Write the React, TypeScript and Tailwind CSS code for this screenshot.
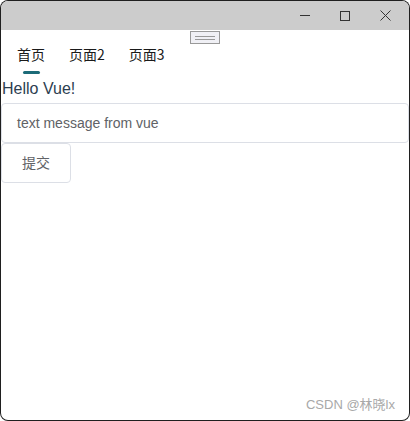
import React from "react";

const tabs = ["首页", "页面2", "页面3"];

export default function App() {
    return (
        <div
            className="w-[410px] h-[421px] bg-[#1f1f1f] rounded-[8px] p-px overflow-hidden"
            style={{ fontFamily: '"Liberation Sans", "Noto Sans CJK SC", sans-serif' }}
        >
            <div className="w-full h-full bg-white rounded-[7px] overflow-hidden flex flex-col">
                {/* Title bar */}
                <div className="h-[29px] bg-[#cccccc] flex justify-end items-center shrink-0">
                    <div className="w-[40px] h-full flex items-center justify-center">
                        <div className="w-[10px] h-px bg-[#333]" />
                    </div>
                    <div className="w-[40px] h-full flex items-center justify-center">
                        <div className="w-[10px] h-[10px] border border-[#333]" />
                    </div>
                    <div className="w-[40px] h-full flex items-center justify-center mr-[4px]">
                        <svg width="11" height="11" viewBox="0 0 11 11">
                            <path d="M0.5 0.5 L10.5 10.5 M10.5 0.5 L0.5 10.5" stroke="#333" strokeWidth="1" />
                        </svg>
                    </div>
                </div>

                {/* Drag handle */}
                <div className="flex justify-center pt-px">
                    <div className="w-[30px] h-[13px] border border-[#999] bg-[#f0f0f5] flex flex-col items-center justify-center gap-[2px]">
                        <div className="w-[20px] h-px bg-[#999]" />
                        <div className="w-[20px] h-px bg-[#999]" />
                    </div>
                </div>

                {/* Tabs */}
                <div className="flex pl-[16px] gap-[24px]">
                    {tabs.map((t, i) => (
                        <div key={t} className="flex flex-col items-center">
                            <span
                                className="text-[14px] leading-[20px] text-[#1a1a1a]"
                                style={{ fontFamily: '"Noto Sans CJK SC", sans-serif' }}
                            >
                                {t}
                            </span>
                            <div className={`mt-[7px] w-[17px] h-[3px] rounded-full ${i === 0 ? "bg-[#1c6b78]" : "bg-transparent"}`} />
                        </div>
                    ))}
                </div>

                <div className="text-[16px] leading-[18px] text-[#2c3e50] mt-[6px] pl-px">Hello Vue!</div>

                <div className="mt-[5px] h-[40px] border border-[#dcdfe6] rounded-[4px] flex items-center pl-[15px] text-[14px] text-[#606266]">
                    text message from vue
                </div>

                <div className="w-[70px] h-[40px] border border-[#dcdfe6] rounded-[4px] flex items-center justify-center text-[14px] text-[#606266]">
                    提交
                </div>

                <div className="flex-1 flex items-end justify-end pr-[14px] pb-[6px]">
                    <span className="text-[13px] text-[#a8a8a8]">CSDN @林晓lx</span>
                </div>
            </div>
        </div>
    );
}
